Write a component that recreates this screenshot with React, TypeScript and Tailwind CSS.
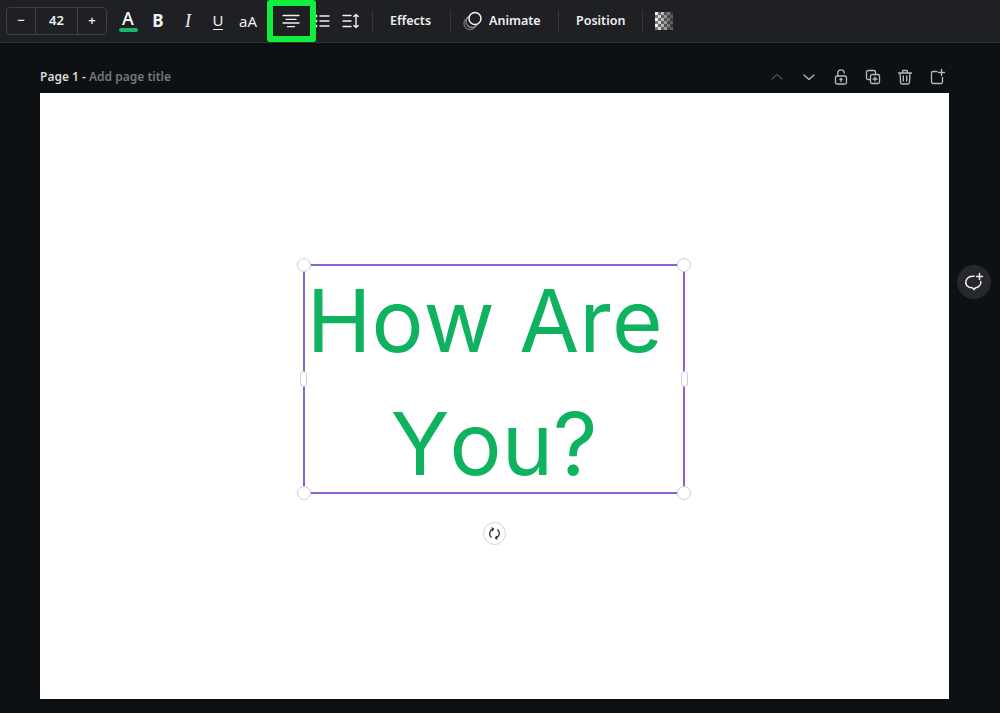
const UI_FONT = "font-['Noto_Sans','Liberation_Sans',sans-serif]";

function ToolIcon({ children }: { children: React.ReactNode }) {
  return (
    <div className="flex h-[30px] w-[30px] shrink-0 items-center justify-center text-[#eeeff0]">
      {children}
    </div>
  );
}

function Divider() {
  return <div className="h-[22px] w-px shrink-0 bg-[#34363a]" />;
}

function AlignCenterIcon() {
  return (
    <svg width="18" height="14" viewBox="0 0 18 14" stroke="currentColor" strokeWidth="1.3" strokeLinecap="round">
      <path d="M1 1.5h16M4 5.3h10M1 9h16M5.5 12.7h7" />
    </svg>
  );
}

function ListIcon() {
  return (
    <svg width="18" height="14" viewBox="0 0 18 14" stroke="currentColor" strokeWidth="1.4" strokeLinecap="round">
      <path d="M8 2h9M8 7h9M8 12h9" />
      <path d="M4.5 1.5v1M4.5 6.5v1M4.5 11.5v1" strokeWidth="1.6" />
    </svg>
  );
}

function SpacingIcon() {
  return (
    <svg width="18" height="16" viewBox="0 0 18 16" fill="none" stroke="currentColor" strokeWidth="1.4" strokeLinecap="round" strokeLinejoin="round">
      <path d="M1 2.5h8M1 8h8M1 13.5h8" />
      <path d="M14 1.5v13M11.8 3.6 14 1.4l2.2 2.2M11.8 12.4l2.2 2.2 2.2-2.2" />
    </svg>
  );
}

function AnimateIcon() {
  return (
    <svg width="20" height="20" viewBox="0 0 20 20" fill="none">
      <circle cx="7" cy="12.5" r="6" stroke="#6d6f73" strokeWidth="1.3" />
      <circle cx="9" cy="10.5" r="6" stroke="#8b8d90" strokeWidth="1.3" />
      <circle cx="12" cy="7.5" r="6" fill="#1f2023" stroke="#f2f2f3" strokeWidth="1.5" />
    </svg>
  );
}

function CheckerIcon() {
  // transparency swatch: squares fading out to the right
  const cells: { x: number; y: number; o: number }[] = [];
  for (let y = 0; y < 6; y++) {
    for (let x = 0; x < 6; x++) {
      if ((x + y) % 2 === 0) cells.push({ x: x * 3, y: y * 3, o: 1 - x * 0.14 });
      else cells.push({ x: x * 3, y: y * 3, o: 0.42 - x * 0.06 });
    }
  }
  return (
    <svg width="18" height="18" viewBox="0 0 18 18">
      {cells.map((c) => (
        <rect key={`${c.x}-${c.y}`} x={c.x} y={c.y} width="3" height="3" fill="#f0f0f0" opacity={c.o} />
      ))}
    </svg>
  );
}

function PageIcon({ children, dim }: { children: React.ReactNode; dim?: boolean }) {
  return (
    <div className={dim ? "flex w-[32px] justify-center text-[#4c4f53]" : "flex w-[32px] justify-center text-[#b6b8bb]"}>
      <svg width="18" height="18" viewBox="0 0 18 18" fill="none" stroke="currentColor" strokeWidth="1.3" strokeLinecap="round" strokeLinejoin="round">
        {children}
      </svg>
    </div>
  );
}

function Toolbar() {
  return (
    <div className={`flex h-[43px] items-center border-b border-[#2f3134] bg-[#1f2023] pl-[6px] ${UI_FONT}`}>
      <div className="flex h-[28px] w-[101px] shrink-0 rounded-[4px] border border-[#3d3f43] text-[13px] font-semibold text-[#eeeff0]">
        <div className="flex w-[28px] items-center justify-center">−</div>
        <div className="flex w-[43px] items-center justify-center border-x border-[#3d3f43]">42</div>
        <div className="flex flex-1 items-center justify-center">+</div>
      </div>
      <div className="ml-[6px] flex">
        <ToolIcon>
          <div className="flex flex-col items-center">
            <span className="text-[18px] font-medium leading-[17px] text-white">A</span>
            <div className="mt-[1px] h-[4px] w-[19px] rounded-full bg-[#1fb36b]" />
          </div>
        </ToolIcon>
        <ToolIcon>
          <span className="text-[17px] font-bold">B</span>
        </ToolIcon>
        <ToolIcon>
          <span className="font-['Liberation_Serif',serif] text-[18px] italic">I</span>
        </ToolIcon>
        <ToolIcon>
          <span className="border-b border-[#eeeff0] text-[15px] leading-[17px]">U</span>
        </ToolIcon>
        <ToolIcon>
          <span className="text-[15px]">aA</span>
        </ToolIcon>
      </div>
      <div className="relative ml-[13px] flex">
        <ToolIcon>
          <AlignCenterIcon />
        </ToolIcon>
        <ToolIcon>
          <ListIcon />
        </ToolIcon>
        <ToolIcon>
          <SpacingIcon />
        </ToolIcon>
        {/* green marker painted over the screenshot */}
        <div className="absolute left-[-9px] top-[-6px] h-[42px] w-[49px] rounded-[3px] border-[6px] border-[#12ee3c]" />
      </div>
      <div className="ml-[6px]">
        <Divider />
      </div>
      <span className="ml-[17px] w-[43px] text-[12.5px] font-semibold text-[#eeeff0]">Effects</span>
      <div className="ml-[17px]">
        <Divider />
      </div>
      <div className="ml-[12px] flex items-center">
        <AnimateIcon />
        <span className="ml-[6px] w-[52px] text-[12.5px] font-semibold text-[#eeeff0]">Animate</span>
      </div>
      <div className="ml-[17px]">
        <Divider />
      </div>
      <span className="ml-[17px] w-[50px] text-[12.5px] font-semibold text-[#eeeff0]">Position</span>
      <div className="ml-[16px]">
        <Divider />
      </div>
      <div className="ml-[12px]">
        <CheckerIcon />
      </div>
    </div>
  );
}

function PageHeader() {
  return (
    <div className={`flex h-[50px] items-center justify-between pt-[17px] ${UI_FONT}`}>
      <div className="text-[12px] font-semibold text-[#d9dadb]">
        Page 1 - <span className="text-[#74777b]">Add page title</span>
      </div>
      <div className="mr-[-4px] flex">
        <PageIcon dim>
          <path d="m4 11 5-4.5 5 4.5" />
        </PageIcon>
        <PageIcon>
          <path d="m4 7 5 4.5L14 7" />
        </PageIcon>
        <PageIcon>
          <rect x="3.5" y="8" width="11" height="8" rx="1.5" />
          <path d="M5.8 8V5a3.2 3.2 0 0 1 6.4 0M9 10.5V13.5M7.8 11.6 9 10.4l1.2 1.2" />
        </PageIcon>
        <PageIcon>
          <rect x="2.5" y="2.5" width="9" height="9" rx="1.5" />
          <rect x="6.5" y="6.5" width="9" height="9" rx="1.5" fill="#0e1114" />
          <path d="M11 9v4M9 11h4" />
        </PageIcon>
        <PageIcon>
          <path d="M2.5 5h13M6.5 5V3.5a1 1 0 0 1 1-1h3a1 1 0 0 1 1 1V5M4 5l.6 9.5a1.5 1.5 0 0 0 1.5 1.5h5.8a1.5 1.5 0 0 0 1.5-1.5L14 5M7.3 8v5M10.7 8v5" />
        </PageIcon>
        <PageIcon>
          <path d="M9 3.5H5A1.5 1.5 0 0 0 3.5 5v9A1.5 1.5 0 0 0 5 15.5h8a1.5 1.5 0 0 0 1.5-1.5V9.5M13.5 1.5v6M10.5 4.5h6" />
        </PageIcon>
      </div>
    </div>
  );
}

function Handle({ className }: { className: string }) {
  return <div className={`absolute rounded-full border border-[#cfcfd4] bg-white ${className}`} />;
}

function TextSelection() {
  return (
    <div className="absolute left-[263px] top-[171px] h-[230px] w-[382px] border-2 border-[#8b5fd6]">
      <div className="mt-[-7px] flex flex-col items-center font-['Inter','Liberation_Sans',sans-serif] text-[87px] leading-[123px] text-[#0fb25e] [font-kerning:none]">
        <span className="whitespace-pre pl-[6px]">{"How Are "}</span>
        <span className="whitespace-nowrap">You?</span>
      </div>
      <Handle className="left-[-8px] top-[-8px] h-[14px] w-[14px]" />
      <Handle className="right-[-8px] top-[-8px] h-[14px] w-[14px]" />
      <Handle className="bottom-[-8px] left-[-8px] h-[14px] w-[14px]" />
      <Handle className="bottom-[-8px] right-[-8px] h-[14px] w-[14px]" />
      <Handle className="left-[-5px] top-[105px] h-[16px] w-[7px]" />
      <Handle className="right-[-5px] top-[105px] h-[16px] w-[7px]" />
      <div className="absolute bottom-[-53px] left-[178px] flex h-[23px] w-[23px] items-center justify-center rounded-full border border-[#d4d4d6] bg-white">
        <svg width="13" height="13" viewBox="0 0 14 14" fill="none" stroke="#222" strokeWidth="1.2" strokeLinecap="round" strokeLinejoin="round">
          <path d="M6 2.2A5 5 0 0 0 3.6 11M4.2 .9 6 2.2 4.7 4" />
          <path d="M8 11.8A5 5 0 0 0 10.4 3M9.8 13.1 8 11.8 9.3 10" />
        </svg>
      </div>
    </div>
  );
}

export default function App() {
  return (
    <div className="relative h-[713px] w-[1000px] overflow-hidden bg-[#0e1114]">
      <Toolbar />
      <div className="pl-[40px] pr-[51px]">
        <PageHeader />
        <div className="relative h-[606px] bg-white">
          <TextSelection />
        </div>
      </div>
      <div className="absolute left-[957px] top-[265px] flex h-[34px] w-[34px] items-center justify-center rounded-full bg-[#26282b]">
        <svg width="20" height="20" viewBox="0 0 20 20" fill="none" stroke="#f2f2f3" strokeWidth="1.5" strokeLinecap="round" strokeLinejoin="round">
          <path d="M10 4.2H9a7 6 0 0 0-4 11l3.4.6 1.6 1.8 1.6-1.8a7 6 0 0 0 5.2-6.3" />
          <path d="M15.5 1.5v6M12.5 4.5h6" />
        </svg>
      </div>
    </div>
  );
}
